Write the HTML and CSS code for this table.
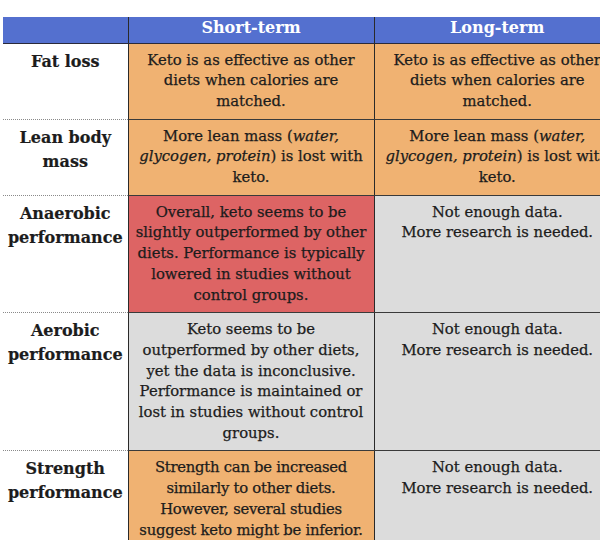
FILE: index.html
```html
<!DOCTYPE html>
<html lang="en">
<head>
<meta charset="utf-8">
<title>Keto comparison</title>
<link rel="stylesheet" href="styles.css">
</head>
<body>
<div class="frame">
  <table class="grid">
    <colgroup>
      <col class="c-label">
      <col class="c-data">
      <col class="c-data">
    </colgroup>
    <thead>
      <tr>
        <th class="corner"></th>
        <th>Short-term</th>
        <th>Long-term</th>
      </tr>
    </thead>
    <tbody>
      <tr>
        <th class="label">Fat loss</th>
        <td class="orange">Keto is as effective as other diets when calories are matched.</td>
        <td class="orange">Keto is as effective as other diets when calories are matched.</td>
      </tr>
      <tr>
        <th class="label">Lean body mass</th>
        <td class="orange">More lean mass (<em>water, glycogen, protein</em>) is lost with keto.</td>
        <td class="orange">More lean mass (<em>water, glycogen, protein</em>) is lost with keto.</td>
      </tr>
      <tr>
        <th class="label">Anaerobic performance</th>
        <td class="red">Overall, keto seems to be slightly outperformed by other diets. Performance is typically lowered in studies without control groups.</td>
        <td class="gray">Not enough data.<br>More research is needed.</td>
      </tr>
      <tr>
        <th class="label">Aerobic performance</th>
        <td class="gray">Keto seems to be outperformed by other diets, yet the data is inconclusive. Performance is maintained or lost in studies without control groups.</td>
        <td class="gray">Not enough data.<br>More research is needed.</td>
      </tr>
      <tr>
        <th class="label">Strength performance</th>
        <td class="orange tight">Strength can be increased similarly to other diets. However, several studies suggest keto might be inferior.</td>
        <td class="gray">Not enough data.<br>More research is needed.</td>
      </tr>
    </tbody>
  </table>
</div>
</body>
</html>
```

FILE: styles.css
```css
html, body {
  margin: 0;
  padding: 0;
  background: #ffffff;
}

body {
  width: 600px;
  overflow: hidden;
}

.frame {
  height: 523px;
  padding: 17px 0 0 3px;
  overflow: hidden;
}

.grid {
  border-collapse: collapse;
  table-layout: fixed;
  width: 617px;
  font-family: "DejaVu Serif", "Liberation Serif", serif;
  color: #1c1c1c;
}

.c-label { width: 125px; }
.c-data { width: 246px; }

thead th {
  background: #5470cf;
  color: #ffffff;
  font-size: 16px;
  font-weight: bold;
  height: 26px;
  padding: 0 0 3px 0;
  line-height: 22px;
  text-align: center;
  border-bottom: 1px solid #2a2a3a;
  border-left: 1px solid #2a2a2a;
  box-sizing: border-box;
}

thead th.corner {
  border-left: none;
}

.label {
  background: #ffffff;
  font-size: 16px;
  font-weight: bold;
  line-height: 24px;
  text-align: center;
  vertical-align: top;
  padding: 6px 0 0 0;
  border-bottom: 1px dotted #8a8a8a;
  -webkit-text-stroke: 0.2px #1c1c1c;
}

td {
  font-size: 14.8px;
  line-height: 20.7px;
  text-align: center;
  vertical-align: top;
  padding: 6px 7px 7px 7px;
  border-left: 1px solid #2a2a2a;
  border-bottom: 1px solid #3a3a3a;
  -webkit-text-stroke: 0.25px #1c1c1c;
}

td.tight {
  letter-spacing: -0.25px;
  padding-left: 5px;
  padding-right: 5px;
}

td em {
  font-style: italic;
}

.orange { background: #f0b272; }
.red { background: #dd6464; }
.gray { background: #dcdcdc; }
```
